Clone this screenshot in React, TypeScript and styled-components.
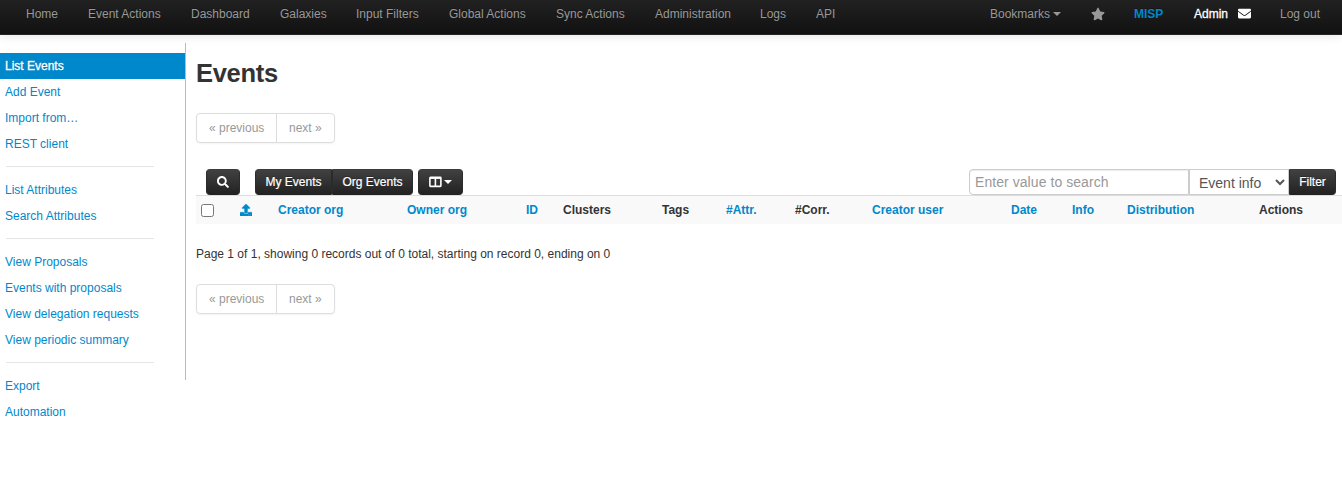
import React from "react";
import styled, { createGlobalStyle } from "styled-components";
import { FaEnvelope, FaSearch, FaStar, FaUpload } from "react-icons/fa";

const LINK = "#0088cc";

const GlobalStyle = createGlobalStyle`
  * { box-sizing: border-box; }
  body {
    margin: 0;
    background: #fff;
    color: #333;
    font: 12px/20px "Liberation Sans", Arial, sans-serif;
    overflow: hidden;
  }
  a { text-decoration: none; }
`;

const Page = styled.div`
  display: flex;
  flex-direction: column;
  height: 481px;
`;

const Navbar = styled.nav`
  display: flex;
  justify-content: space-between;
  flex: none;
  height: 35px;
  padding: 4px 7px 0 26px;
  background: linear-gradient(to bottom, #212121, #111);
  border-bottom: 1px solid #252525;
  box-shadow: 0 1px 10px rgba(0, 0, 0, 0.1);
`;

const NavGroup = styled.div`
  display: flex;
`;

const NavLink = styled.a<{ $w: number; $tone?: string; $bold?: boolean; $stroke?: boolean }>`
  display: flex;
  align-items: center;
  flex: none;
  width: ${(p) => p.$w}px;
  height: 20px;
  white-space: nowrap;
  color: ${(p) => p.$tone ?? "#999"};
  font-weight: ${(p) => (p.$bold ? "bold" : "normal")};
  -webkit-text-stroke: ${(p) => (p.$stroke ? "0.3px" : "0")};
  text-shadow: 0 -1px 0 rgba(0, 0, 0, 0.25);
`;

const StarIcon = styled(FaStar)`
  margin-bottom: 1px;
`;

const MailIcon = styled(FaEnvelope)`
  margin-bottom: 1px;
`;

const UploadIcon = styled(FaUpload)`
  margin-top: -1px;
  stroke: currentColor;
  stroke-width: 18px;
`;

const Caret = styled.span<{ $gap: number }>`
  width: 0;
  height: 0;
  margin-left: ${(p) => p.$gap}px;
  border: 4px solid transparent;
  border-top-color: currentColor;
  border-bottom-width: 0;
`;

const Body = styled.div`
  display: flex;
  align-items: flex-start;
  padding-top: 8px;
`;

const Sidebar = styled.aside`
  flex: none;
  width: 186px;
  height: 337px;
  padding-top: 10px;
  border-right: 1px solid #bbb;
`;

const SideLink = styled.a<{ $active?: boolean }>`
  display: block;
  height: 26px;
  padding: 3px 5px;
  white-space: nowrap;
  color: ${(p) => (p.$active ? "#fff" : LINK)};
  background: ${(p) => (p.$active ? LINK : "transparent")};
  -webkit-text-stroke: ${(p) => (p.$active ? "0.3px" : "0")};
  text-shadow: ${(p) => (p.$active ? "0 -1px 0 rgba(0, 0, 0, 0.2)" : "none")};
`;

const Divider = styled.hr`
  height: 1px;
  margin: 9px 31px 10px 6px;
  border: 0;
  background: #e5e5e5;
`;

const Main = styled.main`
  flex: 1;
  min-width: 0;
  padding: 10px 0 0 10px;
`;

const Title = styled.h2`
  margin: 0 0 20px;
  font-size: 25.5px;
  line-height: 40px;
  letter-spacing: -0.3px;
`;

const Pager = styled.div`
  display: inline-flex;
  height: 30px;
  border: 1px solid #ddd;
  border-radius: 4px;
  box-shadow: 0 1px 2px rgba(0, 0, 0, 0.05);
`;

const PagerItem = styled.span<{ $w: number }>`
  width: ${(p) => p.$w}px;
  padding: 4px 0 0 12px;
  color: #999;
  white-space: nowrap;
  & + & {
    border-left: 1px solid #ddd;
  }
`;

const Toolbar = styled.div`
  display: flex;
  justify-content: space-between;
  margin-top: 26px;
  padding: 0 6px 0 10px;
`;

const ToolGroup = styled.div`
  display: flex;
`;

const Button = styled.button<{ $w: number; $r?: string; $gap?: number }>`
  display: flex;
  align-items: center;
  justify-content: center;
  flex: none;
  width: ${(p) => p.$w}px;
  height: 26px;
  margin: 0 0 0 ${(p) => p.$gap ?? 0}px;
  padding: 0;
  border: 1px solid #2b2b2b;
  border-color: #3b3b3b #2b2b2b #222;
  border-radius: ${(p) => p.$r ?? "4px"};
  background: linear-gradient(to bottom, #414141, #222);
  color: #fff;
  font: 12px/20px "Liberation Sans", Arial, sans-serif;
  -webkit-text-stroke: 0.2px;
  white-space: nowrap;
  text-shadow: 0 -1px 0 rgba(0, 0, 0, 0.25);
`;

const SearchInput = styled.input`
  width: 220px;
  height: 26px;
  margin: 0;
  padding: 0 5px;
  border: 1px solid #ccc;
  border-radius: 4px 0 0 4px;
  box-shadow: inset 0 1px 1px rgba(0, 0, 0, 0.075);
  font: 14px/20px "Liberation Sans", Arial, sans-serif;
  letter-spacing: 0.06px;
  &::placeholder {
    color: #999;
  }
`;

const FieldSelect = styled.select`
  width: 100px;
  height: 26px;
  margin: 0;
  padding: 1px 0 0 5px;
  border: 1px solid #ccc;
  border-radius: 0;
  background: #fff;
  color: #555;
  font: 14px/20px "Liberation Sans", Arial, sans-serif;
`;

const Table = styled.table`
  width: 100%;
  table-layout: fixed;
  border-collapse: separate;
  border-spacing: 0;
  border-top: 1px solid #ddd;
  background: #f9f9f9;
`;

const HeadCell = styled.th<{ $w: number; $link?: boolean }>`
  width: ${(p) => p.$w}px;
  height: 28px;
  padding: 4px 5px;
  text-align: left;
  white-space: nowrap;
  color: ${(p) => (p.$link ? LINK : "#333")};
  svg {
    display: block;
  }
`;

const Checkbox = styled.input`
  display: block;
  width: 13px;
  height: 13px;
  margin: 1px 0 0;
`;

const Summary = styled.p`
  margin: 20px 0;
`;

const sections: { label: string; active?: boolean }[][] = [
  [{ label: "List Events", active: true }, { label: "Add Event" }, { label: "Import from…" }, { label: "REST client" }],
  [{ label: "List Attributes" }, { label: "Search Attributes" }],
  [
    { label: "View Proposals" },
    { label: "Events with proposals" },
    { label: "View delegation requests" },
    { label: "View periodic summary" },
  ],
  [{ label: "Export" }, { label: "Automation" }],
];

const navItems: [string, number][] = [
  ["Home", 62],
  ["Event Actions", 103],
  ["Dashboard", 89],
  ["Galaxies", 76],
  ["Input Filters", 93],
  ["Global Actions", 107],
  ["Sync Actions", 99],
  ["Administration", 105],
  ["Logs", 56],
  ["API", 35],
];

const columns: { label: React.ReactNode; w: number; link?: boolean }[] = [
  { label: <Checkbox type="checkbox" aria-label="Select all" />, w: 39 },
  { label: <UploadIcon size={12} />, w: 38, link: true },
  { label: "Creator org", w: 129, link: true },
  { label: "Owner org", w: 119, link: true },
  { label: "ID", w: 37, link: true },
  { label: "Clusters", w: 99 },
  { label: "Tags", w: 64 },
  { label: "#Attr.", w: 69, link: true },
  { label: "#Corr.", w: 77 },
  { label: "Creator user", w: 139, link: true },
  { label: "Date", w: 61, link: true },
  { label: "Info", w: 55, link: true },
  { label: "Distribution", w: 132, link: true },
  { label: "Actions", w: 88 },
];

const ColumnsIcon = () => (
  <svg width="13" height="12" viewBox="0 0 13 12" fill="none" stroke="currentColor">
    <rect x="0.9" y="1.4" width="11" height="9" rx="0.6" strokeWidth="1.6" />
    <path d="M1 2.1h11" strokeWidth="1.6" />
    <path d="M6.4 2v8.5" strokeWidth="1.6" />
  </svg>
);

const Pagination = () => (
  <Pager>
    <PagerItem $w={79}>« previous</PagerItem>
    <PagerItem $w={58}>next »</PagerItem>
  </Pager>
);

export default function App() {
  return (
    <Page>
      <GlobalStyle />
      <Navbar>
        <NavGroup>
          {navItems.map(([label, w]) => (
            <NavLink key={label} $w={w}>{label}</NavLink>
          ))}
        </NavGroup>
        <NavGroup>
          <NavLink $w={101}>Bookmarks<Caret $gap={3} /></NavLink>
          <NavLink $w={43}><StarIcon size={14} /></NavLink>
          <NavLink $w={60} $tone={LINK} $bold>MISP</NavLink>
          <NavLink $w={44} $tone="#fff" $stroke>Admin</NavLink>
          <NavLink $w={42} $tone="#fff"><MailIcon size={13} /></NavLink>
          <NavLink $w={55}>Log out</NavLink>
        </NavGroup>
      </Navbar>
      <Body>
        <Sidebar>
          {sections.map((items, i) => (
            <React.Fragment key={i}>
              {i > 0 && <Divider />}
              {items.map((item) => (
                <SideLink key={item.label} $active={item.active}>{item.label}</SideLink>
              ))}
            </React.Fragment>
          ))}
        </Sidebar>
        <Main>
          <Title>Events</Title>
          <Pagination />
          <Toolbar>
            <ToolGroup>
              <Button $w={34} aria-label="Search"><FaSearch size={12} /></Button>
              <Button $w={77} $gap={15} $r="4px 0 0 4px">My Events</Button>
              <Button $w={81} $r="0 4px 4px 0">Org Events</Button>
              <Button $w={45} $gap={5} aria-label="Columns"><ColumnsIcon /><Caret $gap={2} /></Button>
            </ToolGroup>
            <ToolGroup>
              <SearchInput placeholder="Enter value to search" />
              <FieldSelect><option>Event info</option></FieldSelect>
              <Button $w={47} $r="0 4px 4px 0">Filter</Button>
            </ToolGroup>
          </Toolbar>
          <Table>
            <thead>
              <tr>
                {columns.map((c, i) => (
                  <HeadCell key={i} $w={c.w} $link={c.link}>{c.label}</HeadCell>
                ))}
              </tr>
            </thead>
          </Table>
          <Summary>Page 1 of 1, showing 0 records out of 0 total, starting on record 0, ending on 0</Summary>
          <Pagination />
        </Main>
      </Body>
    </Page>
  );
}
